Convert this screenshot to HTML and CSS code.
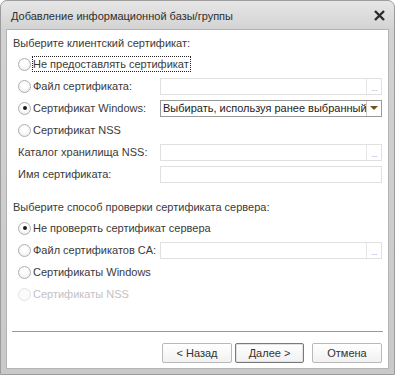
FILE: index.html
```html
<!DOCTYPE html>
<html lang="ru">
<head>
  <meta charset="UTF-8">
  <title>Добавление информационной базы/группы</title>
  <link rel="stylesheet" href="styles.css">
</head>
<body>
<div class="window">
  <!-- заголовок окна -->
  <div class="titlebar">
    <span class="title">Добавление информационной базы/группы</span>
    <svg class="close" width="11" height="11" viewBox="0 0 11 11">
      <path d="M1 1 L10 10 M10 1 L1 10" stroke="#2b2b2b" stroke-width="2.4" fill="none"/>
    </svg>
  </div>

  <div class="client">
    <!-- клиентский сертификат -->
    <div class="section">
      <div class="heading">Выберите клиентский сертификат:</div>

      <div class="row">
        <label class="radio wide"><span class="circle"></span><span class="focus">Не предоставлять сертификат</span></label>
      </div>
      <div class="row">
        <label class="radio"><span class="circle"></span>Файл сертификата:</label>
        <div class="field"><span class="choose">...</span></div>
      </div>
      <div class="row">
        <label class="radio"><span class="circle checked"></span>Сертификат Windows:</label>
        <div class="field select">
          <span class="value">Выбирать, используя ранее выбранный</span>
          <span class="arrow"></span>
        </div>
      </div>
      <div class="row">
        <label class="radio wide"><span class="circle"></span>Сертификат NSS</label>
      </div>
      <div class="row">
        <label class="plain">Каталог хранилища NSS:</label>
        <div class="field"><span class="choose">...</span></div>
      </div>
      <div class="row">
        <label class="plain">Имя сертификата:</label>
        <div class="field"></div>
      </div>
    </div>

    <!-- проверка сертификата сервера -->
    <div class="section second">
      <div class="heading">Выберите способ проверки сертификата сервера:</div>

      <div class="row">
        <label class="radio wide"><span class="circle checked"></span>Не проверять сертификат сервера</label>
      </div>
      <div class="row">
        <label class="radio"><span class="circle"></span>Файл сертификатов CA:</label>
        <div class="field"><span class="choose">...</span></div>
      </div>
      <div class="row">
        <label class="radio wide"><span class="circle"></span>Сертификаты Windows</label>
      </div>
      <div class="row">
        <label class="radio wide disabled"><span class="circle"></span>Сертификаты NSS</label>
      </div>
    </div>

    <div class="footer">
      <div class="separator"></div>
      <div class="buttons">
        <button class="btn">&lt; Назад</button>
        <button class="btn default">Далее &gt;</button>
        <button class="btn cancel">Отмена</button>
      </div>
    </div>
  </div>
</div>
</body>
</html>
```

FILE: styles.css
```css
body {
  margin: 0;
  background-color: #ffffff;
  font-family: "Liberation Sans", Arial, sans-serif;
  font-size: 11px;
  color: #3a3a3a;
}

/* рамка окна */
.window {
  width: 395px;
  height: 375px;
  box-sizing: border-box;
  border: 1px solid #9c9c9c;
  border-radius: 7px 7px 0 0;
  background: linear-gradient(to bottom, #e6e6e6 0px, #d2d2d2 30px, #c9c9c9 100%);
  display: flex;
  flex-direction: column;
}

.titlebar {
  height: 29px;
  display: flex;
  align-items: center;
  justify-content: space-between;
  padding: 0 9px 0 10px;
}

.title {
  font-size: 11px;
  color: #2e2e2e;
  margin-top: 1px;
}

.client {
  flex: 1;
  margin: 0 6px 6px 6px;
  background-color: #fff;
  box-shadow: 0 0 0 1px #b4b4b4;
  padding: 4px 6px 5px 6px;
  display: flex;
  flex-direction: column;
}

.heading {
  height: 18px;
  line-height: 18px;
  margin-bottom: 1px;
}

.second {
  margin-top: 13px;
}

.row {
  display: grid;
  grid-template-columns: 147px minmax(0, 1fr);
  height: 22px;
  align-items: center;
}

.radio, .plain {
  display: flex;
  align-items: center;
  padding-left: 5px;
  white-space: nowrap;
  min-width: 0;
}

.radio.wide {
  grid-column: 1 / 3;
}

.circle {
  width: 13px;
  height: 13px;
  box-sizing: border-box;
  border: 1px solid #b0b0b0;
  border-radius: 50%;
  background: radial-gradient(circle at 50% 40%, #fff 30%, #e6e6e6 100%);
  margin-right: 2px;
  position: relative;
  flex: none;
}

.circle.checked::after {
  content: "";
  position: absolute;
  left: 3.5px;
  top: 3.5px;
  width: 4px;
  height: 4px;
  border-radius: 50%;
  background-color: #1e1e1e;
}

.focus {
  outline: 1px dotted #222;
  outline-offset: 0;
  padding: 1px 1px 1px 0;
}

.disabled {
  color: #c2c2c2;
}

.disabled .circle {
  border-color: #e2e2e2;
  background: #fbfbfb;
}

/* поля ввода */
.field {
  height: 17px;
  box-sizing: border-box;
  border: 1px solid #e0e0e0;
  display: flex;
  justify-content: flex-end;
  align-items: stretch;
  min-width: 0;
}

.choose {
  width: 14px;
  border-left: 1px solid #e6e6e6;
  color: #b4b4b4;
  font-size: 9px;
  line-height: 18px;
  text-align: center;
  letter-spacing: -0.5px;
}

.select {
  border-color: #9a9a9a;
  justify-content: space-between;
}

.select .value {
  padding-left: 2px;
  line-height: 15px;
  color: #222;
  white-space: nowrap;
  overflow: hidden;
}

.arrow {
  width: 14px;
  flex: none;
  border-left: 1px solid #c8c8c8;
  position: relative;
}

.arrow::after {
  content: "";
  position: absolute;
  left: 3px;
  top: 5px;
  border-left: 4px solid transparent;
  border-right: 4px solid transparent;
  border-top: 4px solid #6e5418;
}

/* кнопки внизу */
.footer {
  margin-top: auto;
}

.separator {
  height: 1px;
  background-color: #9a9a9a;
  margin: 0 -1px 11px -1px;
}

.buttons {
  display: flex;
  justify-content: flex-end;
}

.btn {
  height: 20px;
  width: 70px;
  box-sizing: border-box;
  border: 1px solid #b9b9b9;
  border-radius: 2px;
  background: linear-gradient(to bottom, #ffffff, #f1f1f1);
  font-family: "Liberation Sans", Arial, sans-serif;
  font-size: 11px;
  color: #333;
  padding: 0;
}

.btn.default {
  margin-left: 3px;
  width: 69px;
  border-color: #7a7a7a;
  box-shadow: inset 0 0 0 1px #e2e2e2;
}

.btn.cancel {
  margin-left: 8px;
}
```
